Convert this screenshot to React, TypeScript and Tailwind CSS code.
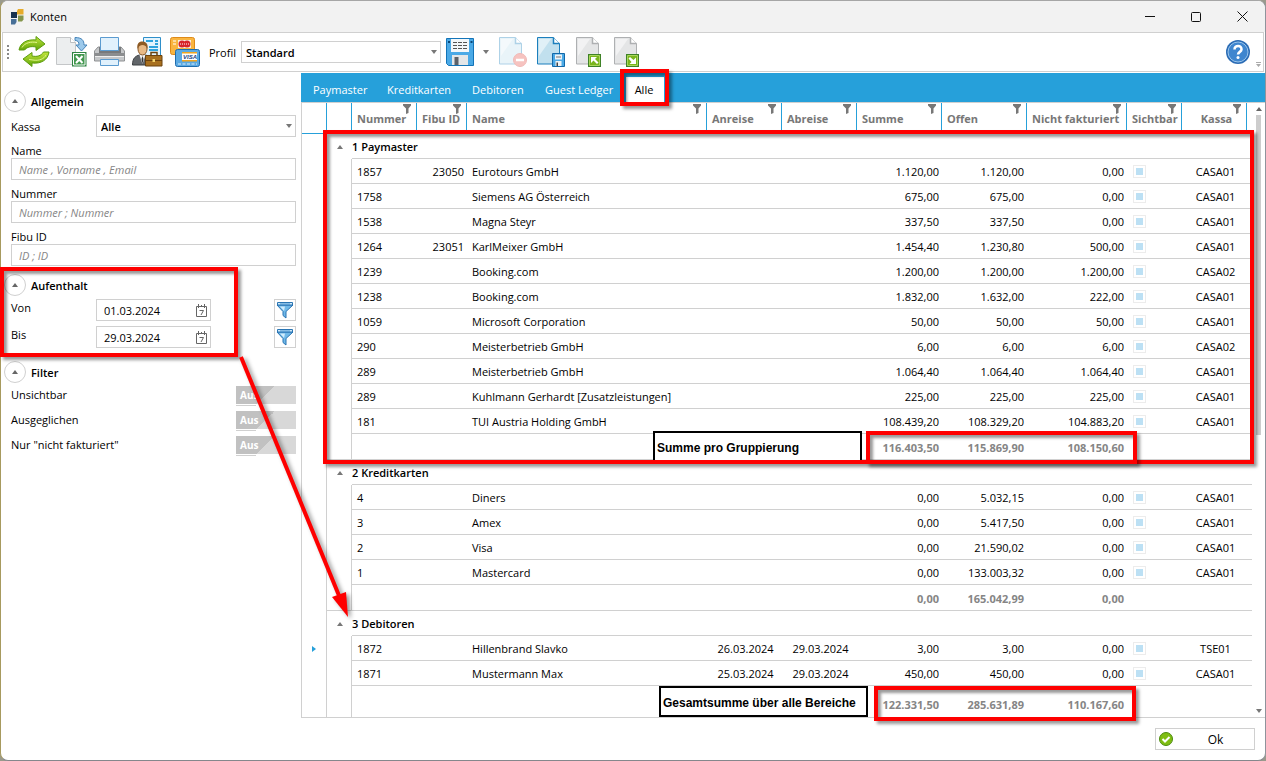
import * as React from "react"

type Row = {
  nr: string
  fibu?: string
  name: string
  from?: string
  to?: string
  sum: string
  open: string
  unbilled: string
  kassa: string
  active?: boolean
}

type Group = {
  title: string
  rows: Row[]
  totals: [string, string, string]
}

const groups: Group[] = [
  {
    title: "1 Paymaster",
    rows: [
      { nr: "1857", fibu: "23050", name: "Eurotours GmbH", sum: "1.120,00", open: "1.120,00", unbilled: "0,00", kassa: "CASA01" },
      { nr: "1758", name: "Siemens AG Österreich", sum: "675,00", open: "675,00", unbilled: "0,00", kassa: "CASA01" },
      { nr: "1538", name: "Magna Steyr", sum: "337,50", open: "337,50", unbilled: "0,00", kassa: "CASA01" },
      { nr: "1264", fibu: "23051", name: "KarlMeixer GmbH", sum: "1.454,40", open: "1.230,80", unbilled: "500,00", kassa: "CASA01" },
      { nr: "1239", name: "Booking.com", sum: "1.200,00", open: "1.200,00", unbilled: "1.200,00", kassa: "CASA02" },
      { nr: "1238", name: "Booking.com", sum: "1.832,00", open: "1.632,00", unbilled: "222,00", kassa: "CASA01" },
      { nr: "1059", name: "Microsoft Corporation", sum: "50,00", open: "50,00", unbilled: "50,00", kassa: "CASA01" },
      { nr: "290", name: "Meisterbetrieb GmbH", sum: "6,00", open: "6,00", unbilled: "6,00", kassa: "CASA02" },
      { nr: "289", name: "Meisterbetrieb GmbH", sum: "1.064,40", open: "1.064,40", unbilled: "1.064,40", kassa: "CASA01" },
      { nr: "289", name: "Kuhlmann Gerhardt [Zusatzleistungen]", sum: "225,00", open: "225,00", unbilled: "225,00", kassa: "CASA01" },
      { nr: "181", name: "TUI Austria Holding GmbH", sum: "108.439,20", open: "108.329,20", unbilled: "104.883,20", kassa: "CASA01" },
    ],
    totals: ["116.403,50", "115.869,90", "108.150,60"],
  },
  {
    title: "2 Kreditkarten",
    rows: [
      { nr: "4", name: "Diners", sum: "0,00", open: "5.032,15", unbilled: "0,00", kassa: "CASA01" },
      { nr: "3", name: "Amex", sum: "0,00", open: "5.417,50", unbilled: "0,00", kassa: "CASA01" },
      { nr: "2", name: "Visa", sum: "0,00", open: "21.590,02", unbilled: "0,00", kassa: "CASA01" },
      { nr: "1", name: "Mastercard", sum: "0,00", open: "133.003,32", unbilled: "0,00", kassa: "CASA01" },
    ],
    totals: ["0,00", "165.042,99", "0,00"],
  },
  {
    title: "3 Debitoren",
    rows: [
      { nr: "1872", name: "Hillenbrand Slavko", from: "26.03.2024", to: "29.03.2024", sum: "3,00", open: "3,00", unbilled: "0,00", kassa: "TSE01", active: true },
      { nr: "1871", name: "Mustermann Max", from: "25.03.2024", to: "29.03.2024", sum: "450,00", open: "450,00", unbilled: "0,00", kassa: "CASA01" },
    ],
    totals: ["122.331,50", "285.631,89", "110.167,60"],
  },
]

const columns = [
  { label: "Nummer", width: "w-[65px]" },
  { label: "Fibu ID", width: "w-[50px]" },
  { label: "Name", width: "" },
  { label: "Anreise", width: "w-[75px]" },
  { label: "Abreise", width: "w-[75px]" },
  { label: "Summe", width: "w-[85px]" },
  { label: "Offen", width: "w-[85px]" },
  { label: "Nicht fakturiert", width: "w-[100px]" },
  { label: "Sichtbar", width: "w-[55px]" },
  { label: "Kassa", width: "w-[65px]", center: true },
]

const tabs = [
  { label: "Paymaster", width: "w-[74px]" },
  { label: "Kreditkarten", width: "w-[85px]" },
  { label: "Debitoren", width: "w-[73px]" },
  { label: "Guest Ledger", width: "w-[91px]" },
]

/* ---------- small glyphs ---------- */

function TriUp({ className = "text-[#666]" }: { className?: string }) {
  return (
    <svg width="6" height="4" viewBox="0 0 6 4" className={className}>
      <path d="M0 4 3 0l3 4z" fill="currentColor" />
    </svg>
  )
}

function TriDown({ className = "text-[#777]" }: { className?: string }) {
  return (
    <svg width="6" height="4" viewBox="0 0 6 4" className={className}>
      <path d="M0 0h6L3 4z" fill="currentColor" />
    </svg>
  )
}

function HeaderFilter() {
  return (
    <svg width="8" height="10" viewBox="0 0 8 10" className="absolute top-px right-[5px] text-[#777]">
      <path d="M0 0h8v1.500L5.500 4.500V9L3 10V4.500L0 1.500z" fill="currentColor" />
    </svg>
  )
}

function Funnel() {
  return (
    <svg width="18" height="18" viewBox="0 0 18 18">
      <path d="M1 4 7 10.500v4l3 2.500v-6.500L17 4z" fill="#6fb8e8" stroke="#2a75b3" strokeWidth="1" />
      <path d="M8 10 4 5.500h5z" fill="#d2ecfc" />
      <path d="M1.500 1.500h15v2.500h-15z" fill="#cfe9fa" stroke="#2a75b3" />
      <path d="M4 3h10" stroke="#3d8fcf" />
    </svg>
  )
}

function Calendar() {
  return (
    <svg width="11" height="13" viewBox="0 0 11 13" fill="none" stroke="#666">
      <path d="M.5 2.500h10v10H.5zM2.500 0v4M8.500 0v4M5.500 1v2" />
      <path d="M3.500 6.500h4L5 11" />
    </svg>
  )
}

function AppLogo() {
  return (
    <svg width="13" height="17" viewBox="0 0 13 17">
      <path d="M7 1h5.500v5.500H6V3z" fill="#e6ac2c" />
      <path d="M0 4h6v6H0z" fill="#17324f" />
      <path d="M7 7.500h5.500v4L11 13.500H7z" fill="#84954b" />
      <path d="M0 11h5.500v3L4 16.500H0z" fill="#476f97" />
    </svg>
  )
}

/* ---------- toolbar icons ---------- */

function RefreshIcon() {
  return (
    <svg width="32" height="32" viewBox="0 0 32 32">
      <defs>
        <linearGradient id="green" x1="0" y1="0" x2="0" y2="1">
          <stop offset="0" stopColor="#c3e63c" />
          <stop offset="1" stopColor="#5fa308" />
        </linearGradient>
      </defs>
      <g fill="url(#green)" stroke="#5c9c10" strokeLinejoin="round">
        <path d="M1 14C2 7 9 3 18 4V.5L27 8l-9 6.500V11c-5-1-9 0-11.500 3z" />
        <path d="M31 16c-1 8-8 12-17 11v3.500L5 23l9-6.500V20c5 1 9 0 11.500-4z" />
      </g>
      <path d="M4 11.500C7 6.500 13 5.500 19 6.500M11 23.500l4 .5c6 1 11-1 13-5" fill="none" stroke="#e0f58c" />
    </svg>
  )
}

function ExcelExportIcon() {
  return (
    <svg width="32" height="32" viewBox="0 0 32 32">
      <path d="M.5 1.500h14l5 5v22H.5z" fill="#eceeef" stroke="#c4c6c8" />
      <path d="M14.500 1.500v5h5" fill="#fff" stroke="#bcbfc1" />
      <path d="M19 1.500c7 0 9 3 9 7.500h3l-5.500 6-5.500-6h3c0-3-1-4.500-4-4.500z" fill="#9cc9eb" stroke="#4583b8" />
      <path d="M16 16h14.500v14.500H16z" fill="#2f8442" />
      <path d="M17.500 17.500h11.500v11.500H17.500z" fill="#43984f" stroke="#fff" />
      <path d="m20 20 6.500 7m0-7-6.500 7" stroke="#fff" strokeWidth="2" />
    </svg>
  )
}

function PrinterIcon() {
  return (
    <svg width="32" height="32" viewBox="0 0 32 32">
      <path d="M4 11h23l3.500 4v10H.5V15z" fill="#c6c8ca" stroke="#8f9193" />
      <path d="M5 11h22v6H5z" fill="#77797b" />
      <path d="M6.500 1.500h18v13h-18z" fill="#e1f1fc" stroke="#5b9bd0" />
      <path d="M1 17h29v3H1z" fill="#8b8d8f" />
      <path d="M1 20.500h29" stroke="#eee" />
      <path d="M6.500 23.500h18v6h-18z" fill="#e1f1fc" stroke="#5b9bd0" />
    </svg>
  )
}

function GuestIcon() {
  return (
    <svg width="32" height="32" viewBox="0 0 32 32">
      <path d="M11.500 1.500h17v20h-17z" fill="#e3f4fd" stroke="#2e8fca" />
      <path d="M14 5h7M23 5h3M23 8h3M17 11h9M17 14h9" stroke="#2fa3dd" strokeWidth="2" />
      <path d="M.5 29c0-7 3-9 7-10h6c4 1 6 4 6 10z" fill="#62666a" stroke="#3d4043" />
      <path d="M7.500 19h6l-3 9z" fill="#f3f3f3" />
      <path d="m10.500 20 1 3-1 5-1-5z" fill="#353535" />
      <ellipse cx="10.500" cy="13" rx="4.500" ry="6" fill="#e8ba86" stroke="#8a5a2b" />
      <path d="M5.500 13c-1-6 2-7.500 5-7.500s6 2 5 7.500c-1-3-3-4-5-4s-4 1-5 4z" fill="#8d5a23" />
      <path d="M19 19v-2.500h6V19" fill="none" stroke="#6c430f" strokeWidth="1.500" />
      <path d="M13.500 19.500h16.500v10.500H13.500z" fill="#a8701f" stroke="#6c430f" />
      <path d="M13.500 24.500h16.500" stroke="#6c430f" />
      <path d="M20.500 23h2.500v3h-2.500z" fill="#f4d36b" />
    </svg>
  )
}

function CardsIcon() {
  return (
    <svg width="32" height="32" viewBox="0 0 32 32">
      <rect x=".5" y="1.500" width="24" height="17" rx="2" fill="#f9b540" stroke="#df8a18" />
      <path d="M8 4h13v8H8z" fill="#f7efdf" />
      <circle cx="12" cy="8" r="3.500" fill="#d8232a" />
      <circle cx="17" cy="8" r="3.500" fill="#d8232a" />
      <path d="M10 8h9" stroke="#fff" strokeDasharray="1 1" />
      <path d="M3 5h3M3 8h3" stroke="#fff" />
      <rect x="5.500" y="13.500" width="24" height="17" rx="2" fill="#5ba9e2" stroke="#1f6dae" />
      <path d="M12 16h15v9H12z" fill="#fff" />
      <path d="M12 16h15v1.500H12zM12 24h15v1.500H12z" fill="#f2a51f" />
      <text x="13" y="23" fontSize="6" fontWeight="700" fontStyle="italic" fill="#1a3f87" className="font-['Liberation_Sans',sans-serif]">VISA</text>
      <path d="M8 28h19" stroke="#dff0fb" strokeDasharray="3 1.500" />
    </svg>
  )
}

function SaveIcon() {
  return (
    <svg width="30" height="30" viewBox="0 0 30 30">
      <path d="M.5 1.500h27v27h-25l-2-2z" fill="#4aa9e6" stroke="#1374b8" />
      <path d="M5 2h18v13H5z" fill="#f3f7fa" />
      <path d="M7 5.500h14M7 8.500h14M7 11.500h14" stroke="#555" strokeDasharray="4 1" />
      <path d="M6 18h16v10H6z" fill="#e3e6e8" />
      <path d="M8.500 20h4v8h-4z" fill="#5c6168" />
      <path d="M3 4v2M25.500 4v2" stroke="#0b4878" strokeWidth="2" />
    </svg>
  )
}

function DocIcon({ tint, children }: { tint: "gray" | "blue"; children: React.ReactNode }) {
  const stroke = tint === "blue" ? "#1b7fbd" : "#aeb0b2"
  return (
    <svg width="30" height="32" viewBox="0 0 30 32">
      <path d="M.5 1.500h16l6 6v20.500H.5z" fill={tint === "blue" ? "#c1e0ee" : "#e4e5e6"} stroke={stroke} />
      <path d="M2 3h12L2 20z" fill="#fff" opacity=".5" />
      <path d="M16.500 1.500v6h6" fill="#fff" stroke={stroke} strokeWidth="1.500" />
      {children}
    </svg>
  )
}

function RemoveDocIcon() {
  return (
    <g>
      <circle cx="21" cy="24" r="6.500" fill="#e8554c" stroke="#d23a33" />
      <path d="M17 24h8" stroke="#fff" strokeWidth="2.500" />
    </g>
  )
}

function MiniSave() {
  return (
    <g>
      <path d="M15.500 17.500h12v13h-12z" fill="#4aa9e6" stroke="#1368a8" />
      <path d="M18 18.500h7v5h-7zM18.500 25h6v5h-6z" fill="#eef3f6" />
      <path d="M19 21h5" stroke="#777" />
      <path d="M19.500 26.500h1.500v3.500h-1.500z" fill="#444" />
    </g>
  )
}

function MiniArrow({ d }: { d: string }) {
  return (
    <g>
      <path d="M12 18h13v13H12z" fill="#3f8228" />
      <path d="M13.500 19.500h10v10h-10z" fill="#79b51c" stroke="#a9d65a" />
      <path d={d} fill="#fff" />
    </g>
  )
}

function HelpIcon() {
  return (
    <svg width="26" height="26" viewBox="0 0 26 26">
      <circle cx="13" cy="13" r="12" fill="#2b6cb5" />
      <circle cx="13" cy="13" r="10" fill="#3f86cf" stroke="#9cc6ec" />
      <path d="M9.500 10.500c0-5 7.500-4.500 7 0-.3 2.500-3.300 2.300-3.500 5" fill="none" stroke="#fff" strokeWidth="2.500" />
      <circle cx="13" cy="18.500" r="1.500" fill="#fff" />
    </svg>
  )
}

function ToolButton({ label, className = "w-[38px]", children }: { label: string; className?: string; children: React.ReactNode }) {
  return (
    <button type="button" aria-label={label} className={`flex h-8 shrink-0 items-center ${className}`}>
      {children}
    </button>
  )
}

/* ---------- sidebar ---------- */

function SectionTitle({ title, className = "" }: { title: string; className?: string }) {
  return (
    <div className={`flex items-center gap-[5px] pl-[3px] ${className}`}>
      <button
        type="button"
        aria-label={`${title} einklappen`}
        className="flex size-[22px] items-center justify-center rounded-full border border-[#d0d0d0] bg-white"
      >
        <TriUp />
      </button>
      <h2 className="pt-[2px] font-semibold">{title}</h2>
    </div>
  )
}

function TextField({ id, label, placeholder }: { id: string; label: string; placeholder: string }) {
  return (
    <div className="pr-[5px] pl-[10px]">
      <label htmlFor={id} className="block h-[21px] pt-[6px] leading-4">{label}</label>
      <input
        id={id}
        placeholder={placeholder}
        className="block h-[22px] w-full border border-[#d0d0d0] px-[7px] italic placeholder:text-[#858585]"
      />
    </div>
  )
}

function DateField({ id, label, value }: { id: string; label: string; value: string }) {
  return (
    <div className="flex pr-[5px] pl-[10px]">
      <label htmlFor={id} className="w-[85px] leading-[18px]">{label}</label>
      <div className="flex h-[22px] w-[115px] items-center border border-[#d0d0d0] pr-[3px] pl-[7px]">
        <input id={id} defaultValue={value} className="w-0 flex-1 pt-[2px]" />
        <Calendar />
      </div>
      <button
        type="button"
        aria-label={`${label} filtern`}
        className="ml-auto flex size-[22px] items-center justify-center border border-[#d0d0d0]"
      >
        <Funnel />
      </button>
    </div>
  )
}

function Toggle({ id, label }: { id: string; label: string }) {
  return (
    <div className="flex h-[25px] items-start justify-between pr-[5px] pl-[10px]">
      <label htmlFor={id} className="leading-[18px]">{label}</label>
      <div className="relative w-[60px]">
        <input
          id={id}
          type="checkbox"
          role="switch"
          className="block h-[18px] w-full appearance-none bg-[#d8d8d8] bg-linear-[135deg,#c1c1c1_50%,#d8d8d8_50%]"
        />
        <span className="pointer-events-none absolute top-0 left-1 text-[10px] leading-[18px] font-bold text-white">Aus</span>
        <div className="mt-px h-px w-5 bg-[#d0d0d0]" />
      </div>
    </div>
  )
}

function Sidebar() {
  return (
    <aside className="w-[300px] shrink-0 pt-[17px]">
      <SectionTitle title="Allgemein" />
      <div className="mt-[3px] flex items-center pr-[5px] pl-[10px]">
        <label htmlFor="kassa" className="w-[85px] pt-[2px]">Kassa</label>
        <div className="relative flex-1">
          <select id="kassa" className="block h-[22px] w-full appearance-none border border-[#d0d0d0] pt-px pl-1 font-semibold">
            <option>Alle</option>
          </select>
          <TriDown className="pointer-events-none absolute top-[9px] right-1 text-[#777]" />
        </div>
      </div>
      <TextField id="name" label="Name" placeholder="Name , Vorname , Email" />
      <TextField id="nummer" label="Nummer" placeholder="Nummer ; Nummer" />
      <TextField id="fibu" label="Fibu ID" placeholder="ID ; ID" />

      <SectionTitle title="Aufenthalt" className="mt-2" />
      <div className="mt-[3px] flex flex-col gap-[5px]">
        <DateField id="von" label="Von" value="01.03.2024" />
        <DateField id="bis" label="Bis" value="29.03.2024" />
      </div>

      <SectionTitle title="Filter" className="mt-[13px]" />
      <div className="mt-[3px]">
        <Toggle id="unsichtbar" label="Unsichtbar" />
        <Toggle id="ausgeglichen" label="Ausgeglichen" />
        <Toggle id="nicht-fakturiert" label={'Nur "nicht fakturiert"'} />
      </div>
    </aside>
  )
}

/* ---------- accounts table ---------- */

const line = "border-b border-[#d0d0d0]"
const side = "border-r border-[#d0d0d0]"
const cell = "border-b border-[#d0d0d0] pt-[2px]"

function GroupRows({ group, last }: { group: Group; last: boolean }) {
  return (
    <tbody>
      <tr className="h-[25px]">
        <td className={side} />
        <td>
          <TriUp className="mx-auto text-[#777]" />
        </td>
        <th colSpan={11} className={`${cell} text-left font-semibold`}>{group.title}</th>
      </tr>
      {group.rows.map((row) => (
        <tr key={`${row.nr}-${row.name}`} className="h-[25px]">
          <td className={side}>
            {row.active && (
              <svg width="4" height="6" viewBox="0 0 4 6" className="mx-auto">
                <path d="M0 0v6l4-3z" fill="#26a0da" />
              </svg>
            )}
          </td>
          <td className={side} />
          <td className={`${cell} pl-[5px]`}>{row.nr}</td>
          <td className={`${cell} pr-[3px] text-right`}>{row.fibu}</td>
          <td className={`${cell} pl-[5px] whitespace-nowrap`}>{row.name}</td>
          <td className={`${cell} pl-[2px] text-center`}>{row.from}</td>
          <td className={`${cell} pl-[2px] text-center`}>{row.to}</td>
          <td className={`${cell} pr-[3px] text-right`}>{row.sum}</td>
          <td className={`${cell} pr-[3px] text-right`}>{row.open}</td>
          <td className={`${cell} pr-[3px] text-right`}>{row.unbilled}</td>
          <td className={`${line} pl-[6px]`}>
            <input
              type="checkbox"
              aria-label={`${row.name} sichtbar`}
              className="block size-[13px] appearance-none border border-[#ececec] bg-[#bce0f4] bg-clip-content p-[2px]"
            />
          </td>
          <td className={`${cell} pl-[2px] text-center`}>{row.kassa}</td>
          <td className={line} />
        </tr>
      ))}
      <tr className={`${last ? "h-[31px]" : "h-[26px]"} font-bold text-[#858585]`}>
        <td className={side} />
        <td className={last ? side : `${side} border-b`} />
        <td colSpan={5} className={last ? "" : line} />
        {group.totals.map((total, i) => (
          <td key={i} className={`${last ? "pt-[6px]" : cell} pr-[3px] text-right`}>{total}</td>
        ))}
        <td colSpan={3} className={last ? "" : line} />
      </tr>
    </tbody>
  )
}

function AccountsTable() {
  return (
    <table className="w-full table-fixed border-separate border-spacing-0">
      <thead>
        <tr className="h-[31px] text-[#777]">
          <th className="w-[25px] border-r border-b border-[#26a0da]" />
          <th className="w-[25px] border-r border-b border-[#26a0da]" />
          {columns.map((col) => (
            <th
              key={col.label}
              className={`relative border-r border-b border-[#26a0da] pt-[2px] pl-[5px] font-bold whitespace-nowrap ${col.width} ${col.center ? "text-center" : "text-left"}`}
            >
              {col.label}
              <HeaderFilter />
            </th>
          ))}
          <th className="w-[5px] border-b border-[#26a0da]" />
        </tr>
      </thead>
      {groups.map((group, i) => (
        <GroupRows key={group.title} group={group} last={i === groups.length - 1} />
      ))}
    </table>
  )
}

/* ---------- annotations ---------- */

function Marker({ className }: { className: string }) {
  return (
    <div
      className={`pointer-events-none absolute border-4 border-[#fe0000] shadow-[3px_3px_3px_rgba(0,0,0,0.4),inset_3px_3px_3px_rgba(0,0,0,0.4)] ${className}`}
    />
  )
}

function Note({ className, children }: { className: string; children: React.ReactNode }) {
  return (
    <div
      className={`pointer-events-none absolute flex items-center border-2 border-black bg-white pt-[2px] pl-[2px] font-['Liberation_Sans',Arial,sans-serif] text-[12px] font-bold whitespace-nowrap ${className}`}
    >
      {children}
    </div>
  )
}

function Annotations() {
  return (
    <>
      <Note className="top-[431px] right-[404px] h-[31px] w-[209px]">Summe pro Gruppierung</Note>
      <Note className="top-[686px] right-[398px] h-[31px] w-[209px]">Gesamtsumme über alle Bereiche</Note>
      <Marker className="top-[267px] left-0 h-[90px] w-[238px]" />
      <Marker className="top-[69px] left-[620px] h-[37px] w-[49px]" />
      <Marker className="top-[130px] right-3 left-[323px] h-[334px]" />
      <Marker className="top-[431px] right-[129px] h-[33px] w-[271px]" />
      <Marker className="top-[686px] right-[130px] h-[35px] w-[262px]" />
      <svg width="120" height="270" viewBox="0 0 120 270" className="pointer-events-none absolute top-[355px] left-[235px] drop-shadow-[3px_2px_2px_rgba(0,0,0,0.4)]">
        <path d="M6 2 105 243" stroke="#fe0000" strokeWidth="4" />
        <path d="m97 242 14-5 2 25z" fill="#fe0000" />
      </svg>
    </>
  )
}

export default function App() {
  return (
    <div className="relative min-h-screen bg-[#9a9a8c] font-['Open_Sans','Noto_Sans',sans-serif] text-[11px] leading-4 text-black">
      <div className="flex min-h-screen flex-col overflow-hidden rounded-lg border border-t-[#a6a6a6] border-r-[#8f949c] border-b-[#85878c] border-l-[#a79a5e] bg-white">
        {/* Title bar */}
        <header className="flex h-[31px] shrink-0 items-center bg-[#f2f2f2] pl-[10px]">
          <AppLogo />
          <h1 className="ml-[6px]">Konten</h1>
          <div className="ml-auto flex">
            <button type="button" aria-label="Minimieren" className="flex h-[29px] w-[45px] items-center justify-center">
              <svg width="11" height="11" viewBox="0 0 11 11"><path d="M0 5.500h10" stroke="#111" /></svg>
            </button>
            <button type="button" aria-label="Maximieren" className="flex h-[29px] w-[46px] items-center justify-center">
              <svg width="10" height="10" viewBox="0 0 10 10"><rect x=".5" y=".5" width="9" height="9" rx="1" fill="none" stroke="#111" /></svg>
            </button>
            <button type="button" aria-label="Schließen" className="flex h-[29px] w-[46px] items-center justify-center">
              <svg width="11" height="11" viewBox="0 0 11 11"><path d="m.5.5 10 10m0-10-10 10" stroke="#111" /></svg>
            </button>
          </div>
        </header>

        {/* Toolbar */}
        <div role="toolbar" aria-label="Konten" className="relative mx-px flex h-10 shrink-0 items-center border border-[#d0d0d0] pl-1">
          <svg width="2" height="14" viewBox="0 0 2 14" className="mr-[9px]">
            <path d="M0 0h2v2H0zM0 4h2v2H0zM0 8h2v2H0zM0 12h2v2H0z" fill="#888" />
          </svg>
          <ToolButton label="Aktualisieren"><RefreshIcon /></ToolButton>
          <ToolButton label="Excel-Export"><ExcelExportIcon /></ToolButton>
          <ToolButton label="Drucken"><PrinterIcon /></ToolButton>
          <ToolButton label="Gast"><GuestIcon /></ToolButton>
          <ToolButton label="Kreditkarten"><CardsIcon /></ToolButton>
          <label htmlFor="profil" className="ml-px w-[32px] pt-[2px]">Profil</label>
          <div className="relative w-[200px]">
            <select id="profil" className="block h-[22px] w-full appearance-none border border-[#d0d0d0] pt-px pl-1 font-semibold">
              <option>Standard</option>
            </select>
            <TriDown className="pointer-events-none absolute top-[9px] right-1 text-[#777]" />
          </div>
          <ToolButton label="Profil speichern" className="ml-[5px] w-[37px]"><SaveIcon /></ToolButton>
          <button type="button" aria-label="Weitere Optionen" className="flex h-6 w-4 items-center"><TriDown /></button>
          <ToolButton label="Profil löschen" className="w-[38px] opacity-35">
            <DocIcon tint="blue"><RemoveDocIcon /></DocIcon>
          </ToolButton>
          <ToolButton label="Profil sichern" className="w-[39px]">
            <DocIcon tint="blue"><MiniSave /></DocIcon>
          </ToolButton>
          <ToolButton label="Importieren">
            <DocIcon tint="gray"><MiniArrow d="M15 21h6l-2 2 3.500 3.500-1.500 1.500-3.500-3.500-2.500 2.500z" /></DocIcon>
          </ToolButton>
          <ToolButton label="Exportieren">
            <DocIcon tint="gray"><MiniArrow d="M22 28h-6.500l2-2-3-3.500 1.500-1.500 3.500 3 2.500-2.500z" /></DocIcon>
          </ToolButton>
          <button type="button" aria-label="Hilfe" className="mr-3 ml-auto"><HelpIcon /></button>
          <svg width="5" height="5" viewBox="0 0 5 5" className="absolute right-[2px] bottom-1">
            <path d="M0 0h5v1H0zM0 2h5L2.500 5z" fill="#aaa" />
          </svg>
        </div>

        <div className="mt-px flex">
          <Sidebar />
          <main className="min-w-0 flex-1 border-b border-l border-[#d0d0d0]">
            <nav className="-ml-px flex h-[29px] items-end bg-[#26a0da] pl-[2px]" role="tablist">
              {tabs.map((tab) => (
                <button key={tab.label} type="button" role="tab" className={`h-[25px] pl-[10px] text-left text-white whitespace-nowrap ${tab.width}`}>
                  {tab.label}
                </button>
              ))}
              <button type="button" role="tab" aria-selected="true" className="h-[25px] w-[38px] bg-white pr-[2px]">Alle</button>
            </nav>
            <div className="flex border-t border-[#d0d0d0]">
              <div className="min-w-0 flex-1">
                <AccountsTable />
              </div>
              <div className="flex w-[13px] flex-col items-center py-1">
                <TriUp />
                <div className="mt-1 h-[320px] w-[5px] bg-[#cdcdcd]" />
                <TriDown className="mt-auto text-[#777]" />
              </div>
            </div>
          </main>
        </div>

        <footer className="flex justify-end pt-[10px] pr-[10px] pb-2">
          <button type="button" className="flex h-[22px] w-[100px] items-center border border-[#d0d0d0] pl-[3px]">
            <svg width="14" height="14" viewBox="0 0 14 14">
              <circle cx="7" cy="7" r="6.500" fill="#7fbd12" stroke="#4c8a10" />
              <path d="m3.500 7 2.500 2.500L10.500 5" fill="none" stroke="#fff" strokeWidth="2" />
            </svg>
            <span className="flex-1 pt-[2px] pl-1 text-[12px]">Ok</span>
          </button>
        </footer>
      </div>
      <Annotations />
    </div>
  )
}
